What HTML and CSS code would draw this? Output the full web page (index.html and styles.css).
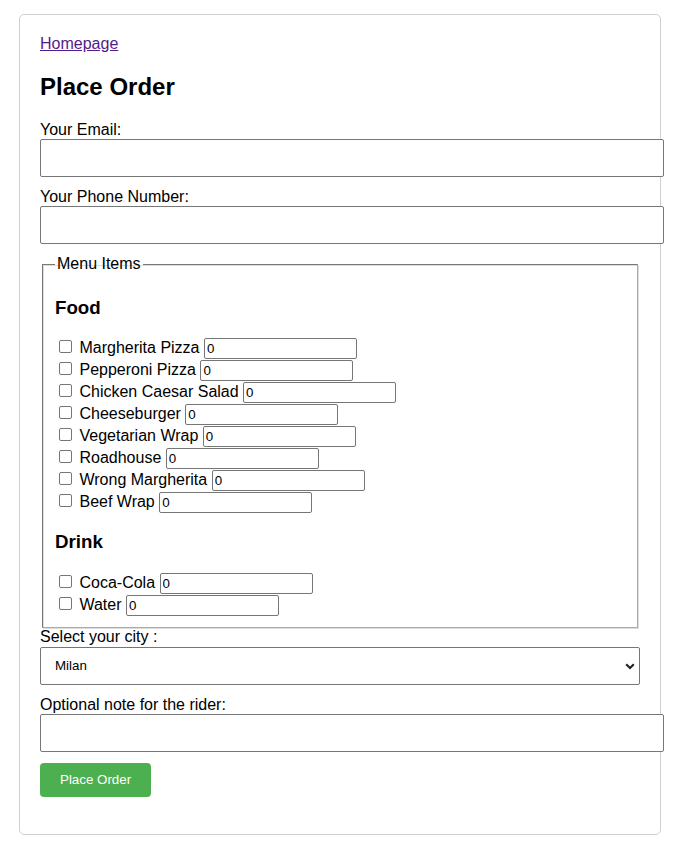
FILE: index.html
```html
<!DOCTYPE html>
<html>
<head>
<meta charset="utf-8">
<title>Place Order</title>
<link rel="stylesheet" href="styles.css">
</head>
<body>
<div class="card">
  <div class="nav"><a class="home" href="#">Homepage</a></div>
  <h2 class="title">Place Order</h2>
  <form class="order-form">
    <label class="field-label" for="email">Your Email:</label>
    <input class="wide-input" id="email" type="text">
    <label class="field-label" for="phone">Your Phone Number:</label>
    <input class="wide-input" id="phone" type="text">
    <fieldset class="menu">
      <legend class="menu-legend">Menu Items</legend>
      <h3 class="cat">Food</h3>
      <div class="item"><input class="chk" type="checkbox"> <label>Margherita Pizza</label> <input class="qty" type="text" value="0"></div>
      <div class="item"><input class="chk" type="checkbox"> <label>Pepperoni Pizza</label> <input class="qty" type="text" value="0"></div>
      <div class="item"><input class="chk" type="checkbox"> <label>Chicken Caesar Salad</label> <input class="qty" type="text" value="0"></div>
      <div class="item"><input class="chk" type="checkbox"> <label>Cheeseburger</label> <input class="qty" type="text" value="0"></div>
      <div class="item"><input class="chk" type="checkbox"> <label>Vegetarian Wrap</label> <input class="qty" type="text" value="0"></div>
      <div class="item"><input class="chk" type="checkbox"> <label>Roadhouse</label> <input class="qty" type="text" value="0"></div>
      <div class="item"><input class="chk" type="checkbox"> <label>Wrong Margherita</label> <input class="qty" type="text" value="0"></div>
      <div class="item"><input class="chk" type="checkbox"> <label>Beef Wrap</label> <input class="qty" type="text" value="0"></div>
      <h3 class="cat">Drink</h3>
      <div class="item"><input class="chk" type="checkbox"> <label>Coca-Cola</label> <input class="qty" type="text" value="0"></div>
      <div class="item"><input class="chk" type="checkbox"> <label>Water</label> <input class="qty" type="text" value="0"></div>
    </fieldset>
    <label class="field-label" for="city">Select your city :</label>
    <div class="select-wrap">
      <select class="city" id="city">
        <option>Milan</option>
      </select>
      <svg class="chev" width="10" height="7" viewBox="0 0 10 7"><path d="M1.2 1.3 L5 5 L8.8 1.3" fill="none" stroke="#222" stroke-width="2.1"/></svg>
    </div>
    <label class="field-label" for="note">Optional note for the rider:</label>
    <input class="wide-input" id="note" type="text">
    <button class="submit" type="button">Place Order</button>
  </form>
</div>
</body>
</html>
```
FILE: styles.css
```css
html, body {
  margin: 0;
  padding: 0;
  background: #fff;
}
body {
  font-family: "Liberation Sans", Arial, sans-serif;
  font-size: 16px;
  color: #000;
}
.card {
  width: 600px;
  margin: 14px 0 22px 19px;
  padding: 20px;
  border: 1px solid #d0d0d0;
  border-radius: 5px;
}
.nav {
  line-height: 18px;
}
.home {
  color: #551a8b;
  text-decoration: underline;
}
.title {
  font-size: 24px;
  font-weight: bold;
  margin: 20px 0 20px;
  line-height: 28px;
}
.order-form {
  margin: 0;
}
.field-label {
  display: block;
  line-height: 18px;
}
.wide-input {
  display: block;
  box-sizing: border-box;
  width: calc(100% + 24px);
  height: 38px;
  margin: 0 0 11px;
  padding: 10px 11px;
  border: 1px solid #767676;
  border-radius: 2px;
  font-family: "Liberation Sans", Arial, sans-serif;
  font-size: 13.33px;
  background: #fff;
}
.menu {
  margin: 3px 2px 0;
  padding: 5.6px 12px 11px;
  border-color: #777 #aaa #aaa #777;
  border-width: 1px;
  border-style: solid;
  box-shadow: inset 1px 1px 0 #ddd, 1px 1px 0 #ddd;
}
.menu-legend {
  padding: 0 2px;
  font-size: 16px;
  line-height: 18px;
}
.cat {
  font-size: 18.72px;
  font-weight: bold;
  margin: 18px 0 19px;
  line-height: 21.5px;
}
.item {
  height: 22px;
  line-height: 22px;
  white-space: nowrap;
}
.chk {
  width: 13px;
  height: 13px;
  margin: 3px 3px 3px 4px;
  vertical-align: -3px;
  appearance: none;
  -webkit-appearance: none;
  border: 1px solid #767676;
  border-radius: 2px;
  background: #fff;
  box-sizing: border-box;
}
.qty {
  box-sizing: border-box;
  width: 153px;
  height: 21px;
  padding: 1px 2px;
  border: 1px solid #767676;
  border-radius: 2px;
  font-family: "Liberation Sans", Arial, sans-serif;
  font-size: 13.33px;
  vertical-align: middle;
  margin: 0;
}
.select-wrap {
  position: relative;
  width: 100%;
  margin: 1px 0 11px;
}
.city {
  display: block;
  box-sizing: border-box;
  width: 100%;
  height: 38px;
  margin: 0;
  padding: 0 14px;
  border: 1px solid #767676;
  border-radius: 2px;
  background: #fff;
  font-family: "Liberation Sans", Arial, sans-serif;
  font-size: 13.33px;
  color: #000;
  appearance: none;
  -webkit-appearance: none;
}
.chev {
  position: absolute;
  right: 5px;
  top: 16px;
  pointer-events: none;
}
.submit {
  display: block;
  margin: 11px 0 17px;
  height: 34px;
  padding: 0 20px;
  background: #4caf50;
  color: #fff;
  border: none;
  border-radius: 4px;
  font-family: "Liberation Sans", Arial, sans-serif;
  font-size: 13.33px;
}
```
